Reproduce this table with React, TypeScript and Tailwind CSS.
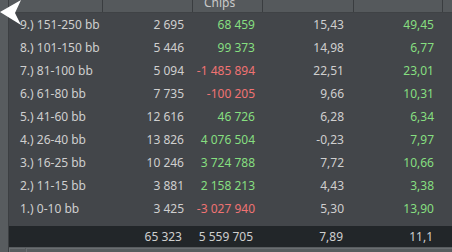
const rows = [
  { label: "9.) 151-250 bb", hands: "2 695", chips: "68 459", bb: "15,43", bb100: "49,45" },
  { label: "8.) 101-150 bb", hands: "5 446", chips: "99 373", bb: "14,98", bb100: "6,77" },
  { label: "7.) 81-100 bb", hands: "5 094", chips: "-1 485 894", bb: "22,51", bb100: "23,01" },
  { label: "6.) 61-80 bb", hands: "7 735", chips: "-100 205", bb: "9,66", bb100: "10,31" },
  { label: "5.) 41-60 bb", hands: "12 616", chips: "46 726", bb: "6,28", bb100: "6,34" },
  { label: "4.) 26-40 bb", hands: "13 826", chips: "4 076 504", bb: "-0,23", bb100: "7,97" },
  { label: "3.) 16-25 bb", hands: "10 246", chips: "3 724 788", bb: "7,72", bb100: "10,66" },
  { label: "2.) 11-15 bb", hands: "3 881", chips: "2 158 213", bb: "4,43", bb100: "3,38" },
  { label: "1.) 0-10 bb", hands: "3 425", chips: "-3 027 940", bb: "5,30", bb100: "13,90" },
];

const grid = "grid grid-cols-[94px_90px_70px_91px_89px_1fr]";

export default function App() {
  return (
    <div className="relative w-[452px] h-[252px] overflow-hidden bg-[#43464a] text-[12px] font-['Noto_Sans',sans-serif] flex">
      <div className="w-[9px] bg-[#585c5f] border-r border-[#3c3f42] shrink-0" />
      <div className="flex-1 flex flex-col">
        <div className={`${grid} h-[13px] bg-[#55595c] border-b border-[#3f4245] text-[#c9c9c9]`}>
          <div className="border-r border-[#3a3d40]" />
          <div className="border-r border-[#3a3d40]" />
          <div className="border-r border-[#3a3d40] pl-[11px] leading-[12px] -mt-[3px] overflow-hidden">Chips</div>
          <div className="border-r border-[#3a3d40]" />
          <div className="border-r border-[#3a3d40]" />
          <div />
        </div>
        {rows.map((r) => (
          <div key={r.label} className={`${grid} h-[23px] items-center text-[#cfcfcf]`}>
            <div className="pl-[11px] whitespace-nowrap">{r.label}</div>
            <div className="text-right pr-[9px]">{r.hands}</div>
            <div className={`text-right pr-[8px] whitespace-nowrap ${r.chips.startsWith("-") ? "text-[#f07373]" : "text-[#86df80]"}`}>{r.chips}</div>
            <div className="text-right pr-[10px]">{r.bb}</div>
            <div className="text-right pr-[9px] text-[#86df80]">{r.bb100}</div>
            <div />
          </div>
        ))}
        <div className={`${grid} mt-[6px] h-[21px] items-center bg-[#222629] text-[#cfcfcf]`}>
          <div />
          <div className="text-right pr-[11px]">65 323</div>
          <div className="text-right pr-[10px] whitespace-nowrap">5 559 705</div>
          <div className="text-right pr-[11px]">7,89</div>
          <div className="text-right pr-[10px]">11,1</div>
          <div />
        </div>
        <div className="flex-1 flex bg-[#585c5f] pt-[1px] gap-[1px]">
          <div className="w-[16px] border-t border-l border-[#6a6e71]" />
          <div className="flex-1 border-t border-l border-[#6a6e71]" />
        </div>
      </div>
      <svg className="absolute left-0 top-0" width="24" height="27" viewBox="0 0 24 27">
        <polygon points="21,0 0,12 21,25 15,13" fill="#ffffff" />
      </svg>
    </div>
  );
}
